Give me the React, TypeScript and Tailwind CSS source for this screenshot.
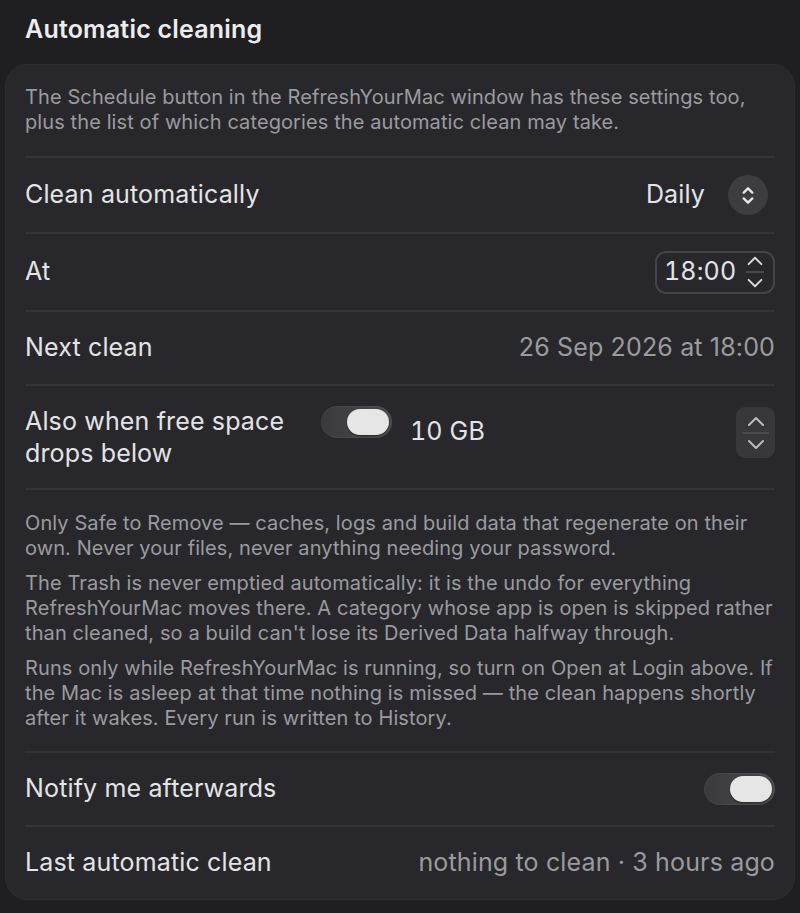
import type { ReactNode } from "react";

function Chevrons({ className }: { className?: string }) {
  return (
    <svg viewBox="0 0 16 24" className={className} fill="none" stroke="currentColor" strokeWidth="2.4" strokeLinecap="round" strokeLinejoin="round">
      <path d="M3.5 9 L8 4.5 L12.5 9" />
      <path d="M3.5 15 L8 19.5 L12.5 15" />
    </svg>
  );
}

function Stepper({ className, big }: { className?: string; big?: boolean }) {
  const svgCls = big ? "h-[12px] w-[26px]" : "h-[11px] w-[20px]";
  return (
    <div className={`flex flex-col items-center justify-center ${className ?? ""}`}>
      <svg viewBox="0 0 20 12" className={svgCls} fill="none" stroke="currentColor" strokeWidth="2" strokeLinecap="round" strokeLinejoin="round">
        <path d="M3 10 L10 3 L17 10" />
      </svg>
      <div className="my-[5px] h-[2px] w-full bg-[#4a4a4e]" />
      <svg viewBox="0 0 20 12" className={svgCls} fill="none" stroke="currentColor" strokeWidth="2" strokeLinecap="round" strokeLinejoin="round">
        <path d="M3 2 L10 9 L17 2" />
      </svg>
    </div>
  );
}

function Toggle() {
  return (
    <div className="flex h-[32px] w-[71px] items-center justify-end rounded-full bg-gradient-to-r from-[#3a3a3d] to-[#4a4a4d] p-[3px] shadow-[inset_0_0_0_1px_rgba(255,255,255,0.04)]">
      <div className="h-[26px] w-[42px] rounded-full bg-[#e6e6e6] shadow-[0_1px_2px_rgba(0,0,0,0.4)]" />
    </div>
  );
}

function Row({ h, children, last }: { h: string; children: ReactNode; last?: boolean }) {
  return (
    <div className={`flex items-center justify-between ${h} ${last ? "" : "border-b-2 border-[#343438]"}`}>
      {children}
    </div>
  );
}

export default function App() {
  return (
    <div className="h-[913px] w-full bg-[#1f1f22] font-['Inter','Liberation_Sans',sans-serif] text-[25px] tracking-[0.15px] text-[#e4e4e6]">
      <h1 className="px-[25px] pt-[12px] text-[25px] font-semibold leading-[34px] tracking-[0.2px] text-[#ececee]">
        Automatic cleaning
      </h1>
      <div className="mx-[5px] mt-[18px] rounded-[22px] border border-[#2e2e32] bg-[#28282c] px-[19px]">
        <div className="border-b-2 border-[#343438] pb-[21px] pt-[20px] text-[20px] leading-[25px] tracking-[0.1px] text-[#9b9b9f]">
          The Schedule button in the RefreshYourMac window has these settings too, plus the list of which categories the automatic clean may take.
        </div>

        <Row h="h-[76px]">
          <span>Clean automatically</span>
          <div className="mr-[7px] flex items-center gap-[23px]">
            <span>Daily</span>
            <div className="flex h-[40px] w-[40px] items-center justify-center rounded-full bg-[#3d3d41] text-[#e8e8ea]">
              <Chevrons className="h-[23px] w-[16px]" />
            </div>
          </div>
        </Row>

        <Row h="h-[78px]">
          <span>At</span>
          <div className="flex h-[43px] w-[120px] items-center justify-between rounded-[11px] border-2 border-[#444448] pl-[7px] pr-[9px]">
            <span className="tabular-nums">18:00</span>
            <Stepper className="w-[18px] text-[#dcdcde]" />
          </div>
        </Row>

        <Row h="h-[74px]">
          <span>Next clean</span>
          <span className="text-[#9b9b9f]">26 Sep 2026 at 18:00</span>
        </Row>

        <Row h="h-[104px]">
          <div className="flex items-center">
            <span className="w-[296px] leading-[32px]">Also when free space drops below</span>
            <div className="mb-[30px]">
              <Toggle />
            </div>
            <span className="mb-[10px] ml-[18px] tabular-nums">10 GB</span>
          </div>
          <div className="mb-[9px] flex h-[51px] w-[39px] items-center justify-center rounded-[9px] bg-[#38383c] text-[#bcbcbe]">
            <Stepper big className="w-[27px]" />
          </div>
        </Row>

        <div className="flex flex-col gap-[10px] border-b-2 border-[#343438] pb-[20px] pt-[21px] text-[20px] leading-[25px] tracking-[0.1px] text-[#9b9b9f]">
          <p>Only Safe to Remove — caches, logs and build data that regenerate on their own. Never your files, never anything needing your password.</p>
          <p>The Trash is never emptied automatically: it is the undo for everything RefreshYourMac moves there. A category whose app is open is skipped rather than cleaned, so a build can't lose its Derived Data halfway through.</p>
          <p>Runs only while RefreshYourMac is running, so turn on Open at Login above. If the Mac is asleep at that time nothing is missed — the clean happens shortly after it wakes. Every run is written to History.</p>
        </div>

        <Row h="h-[74px]">
          <span>Notify me afterwards</span>
          <Toggle />
        </Row>

        <Row h="h-[72px]" last>
          <span>Last automatic clean</span>
          <span className="text-[#9b9b9f]">nothing to clean · 3 hours ago</span>
        </Row>
      </div>
    </div>
  );
}
